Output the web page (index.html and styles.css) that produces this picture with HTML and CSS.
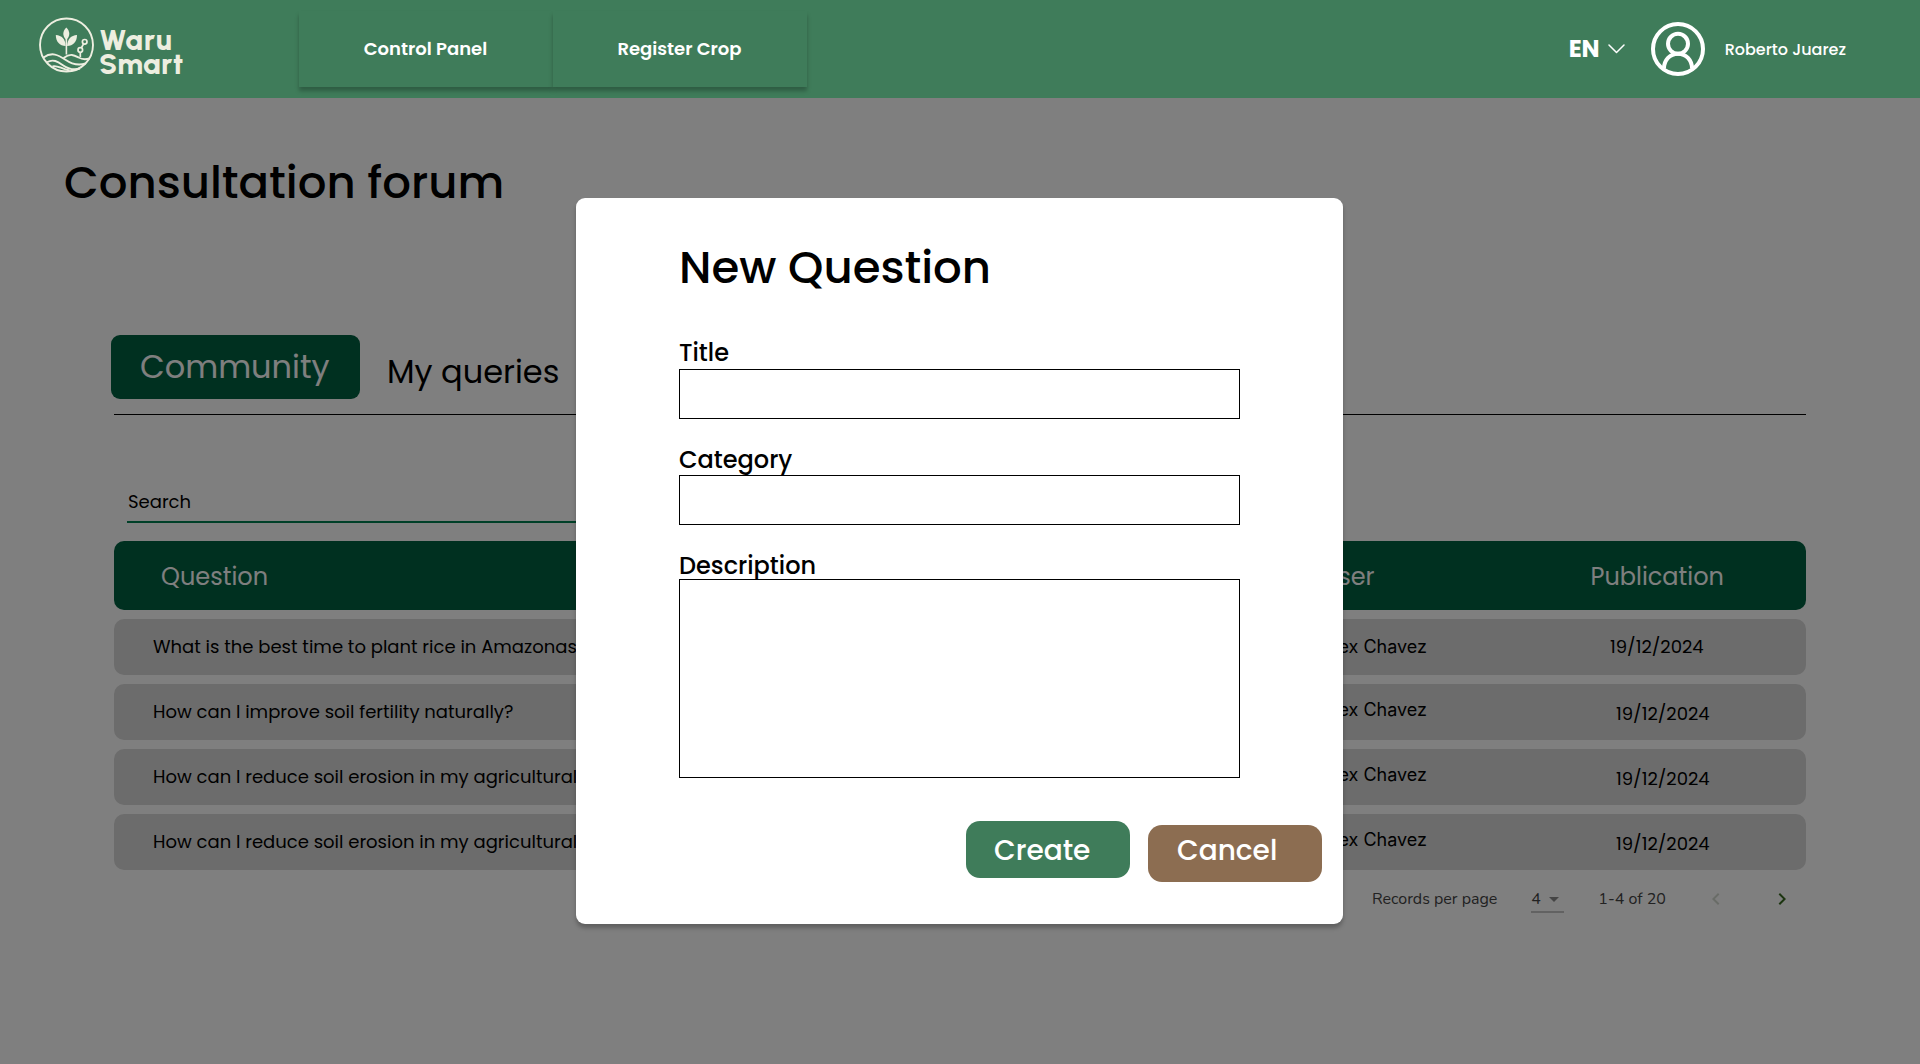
FILE: index.html
```html
<!DOCTYPE html>
<html lang="en">
<head>
<meta charset="utf-8">
<title>Waru Smart – Consultation forum</title>
<link rel="stylesheet" href="styles.css">
</head>
<body>
<header class="topbar">
  <a class="logo">
    <svg class="logo-mark" viewBox="0 0 55 56" fill="none" stroke="currentColor" stroke-width="1.9">
      <circle cx="27.5" cy="28" r="26.5"/>
      <g fill="currentColor" stroke="none">
        <path d="M27.3 10.5c4 4 4 8.500 0 12.500c-4-4-4-8.500 0-12.500z"/>
        <path d="M16.800 18c6 .4 9.600 4 9.900 11c-6-.2-9.800-4-9.900-11z"/>
        <path d="M38 18c-6 .4-9.600 4-9.900 11c6-.2 9.800-4 9.900-11z"/>
      </g>
      <path d="M27.400 22v15.500" stroke-width="1.600"/>
      <circle cx="45.700" cy="24.800" r="2.300" stroke-width="1.700"/>
      <circle cx="41.300" cy="33" r="2.300" stroke-width="1.700"/>
      <path d="M44.500 27l-2.100 3.900M41.300 35.400v4.600" stroke-width="1.700"/>
      <path d="M4.500 40.500C13 34.500 19.500 38 26 42.500S39 49 46.500 46.500"/>
      <path d="M24.500 41C31.500 36 35 38 39.500 40.500S47 42.500 50.500 41.500"/>
      <path d="M8 45.300c6-3.800 11-.5 15.500 2.700s11 5.500 17.500 3.500"/>
      <path d="M13.500 49.300c5-1.300 8 2.200 17 4.200"/>
    </svg>
    <span class="logo-text"><span class="logo-line logo-waru">Waru</span><span class="logo-line">Smart</span></span>
  </a>
  <nav class="nav">
    <a class="nav-item">Control Panel</a>
    <a class="nav-item">Register Crop</a>
  </nav>
  <div class="account">
    <span class="lang">EN</span>
    <svg class="lang-arrow" viewBox="0 0 17 10" fill="none" stroke="currentColor" stroke-width="1.5" stroke-linecap="round" stroke-linejoin="round"><path d="M1 1l7.500 7.500L16 1"/></svg>
    <svg class="avatar" viewBox="0 0 54 54" fill="none" stroke="currentColor" stroke-width="4">
      <circle cx="27" cy="27" r="25"/>
      <circle cx="27" cy="21.800" r="10"/>
      <path d="M13 46.500C13 38 19 31.800 27 31.800S41 38 41 46.500"/>
    </svg>
    <span class="user-name">Roberto Juarez</span>
  </div>
</header>

<main class="page">
  <h1 class="page-title">Consultation forum</h1>
  <section class="forum">
    <div class="tabs">
      <button class="tab tab-active">Community</button>
      <button class="tab">My queries</button>
    </div>
    <div class="search">Search</div>
    <div class="table">
      <div class="row row-head"><span class="question">Question</span><span class="author">User</span><span class="date">Publication</span></div>
      <div class="row row-first"><span class="question">What is the best time to plant rice in Amazonas?</span><span class="author">Alex Chavez</span><span class="date">19/12/2024</span></div>
      <div class="row"><span class="question">How can I improve soil fertility naturally?</span><span class="author">Alex Chavez</span><span class="date">19/12/2024</span></div>
      <div class="row"><span class="question">How can I reduce soil erosion in my agricultural</span><span class="author">Alex Chavez</span><span class="date">19/12/2024</span></div>
      <div class="row"><span class="question">How can I reduce soil erosion in my agricultural</span><span class="author">Alex Chavez</span><span class="date">19/12/2024</span></div>
    </div>
    <div class="pager">
      <span>Records per page</span>
      <span class="page-size">4 <svg class="caret" viewBox="0 0 10 5"><path d="M0 0h10L5 5z"/></svg></span>
      <span class="range">1-4 of 20</span>
      <svg class="step step-prev" viewBox="0 0 24 24"><path d="M15.410 7.410L14 6l-6 6 6 6 1.410-1.410L10.830 12z"/></svg>
      <svg class="step step-next" viewBox="0 0 24 24"><path d="M10 6L8.590 7.410 13.170 12l-4.580 4.590L10 18l6-6z"/></svg>
    </div>
  </section>
</main>

<div class="backdrop">
  <form class="dialog">
    <h2 class="dialog-title">New Question</h2>
    <div class="field"><label class="label" for="title">Title</label><input class="input" id="title"></div>
    <div class="field field-category"><label class="label" for="category">Category</label><input class="input" id="category"></div>
    <div class="field field-description"><label class="label" for="description">Description</label><textarea class="input" id="description"></textarea></div>
    <div class="actions">
      <button class="btn btn-create" type="button">Create</button>
      <button class="btn btn-cancel" type="button">Cancel</button>
    </div>
  </form>
</div>
</body>
</html>
```
FILE: styles.css
```css
* { box-sizing: border-box; }

body {
  margin: 0;
  height: 1064px;
  overflow: hidden;
  background: #fff;
  color: #000;
  font-family: Poppins, Inter, sans-serif;
}

button, input, textarea { font: inherit; margin: 0; border: 0; padding: 0; }

/* Top bar */
.topbar {
  display: flex;
  align-items: center;
  height: 98px;
  padding: 0 74px 0 39px;
  background: #3f7c5a;
  color: #fff;
}
.logo { display: flex; align-self: flex-start; width: 260px; margin-top: 17px; color: #edeee0; }
.logo-mark { width: 55px; height: 56px; margin-right: 5px; }
.logo-text {
  margin-top: 11px;
  font: 800 29px/24px Urbanist, Poppins, sans-serif;
  letter-spacing: .4px;
}
.logo-line { display: block; }
.logo-waru { letter-spacing: 1.1px; }
.nav { display: flex; }
.nav-item {
  width: 254px;
  height: 76px;
  padding-right: 1px;
  font-weight: 600;
  font-size: 18px;
  line-height: 76px;
  text-align: center;
  background: #3f7c5a;
  box-shadow: 0 4px 4px rgba(0, 0, 0, .25);
}
.account { display: flex; align-items: center; margin-left: auto; }
.lang { margin-top: -1px; font-weight: 700; font-size: 24px; }
.lang-arrow { width: 17px; height: 10px; margin: 0 26px 0 8px; }
.avatar { width: 54px; height: 54px; margin-right: 20px; }
.user-name { font-weight: 500; font-size: 16px; }

/* Forum page */
.page { padding: 51px 114px 0 64px; }
.page-title { margin: 0; font-weight: 500; font-size: 45px; line-height: 68px; }
.forum { margin: 118px 0 0 50px; }
.tabs {
  display: flex;
  gap: 27px;
  height: 80px;
  border-bottom: 1px solid #000;
}
.tab { height: 64px; margin-top: 5px; background: none; font-size: 32px; line-height: 64px; color: #000; }
.tab-active {
  width: 249px;
  margin: 0 0 0 -3px;
  padding-left: 29px;
  border-radius: 9px;
  background: #006040;
  color: #fff;
  text-align: left;
}
.search {
  width: 560px;
  height: 35px;
  margin: 73px 0 18px 13px;
  padding-left: 1px;
  border-bottom: 2px solid #008050;
  font-size: 18px;
  line-height: 27px;
}
.table { display: grid; gap: 9px; }
.row {
  display: grid;
  grid-template-columns: 1100px 213px 1fr;
  align-items: start;
  height: 56px;
  border-radius: 10px;
  background: #d9d9d9;
  font-size: 18px;
  line-height: 56px;
}
.question { padding-left: 39px; }
.author { margin-top: -2px; font-family: Inter, sans-serif; text-align: right; }
.date { margin-top: 2px; padding-left: 189px; }
.row-first .author, .row-first .date { margin-top: 0; }
.row-first .date { padding-left: 183px; }
.row-head {
  height: 69px;
  background: #006040;
  color: #fff;
  font-size: 24px;
  line-height: 71px;
}
.row-head .question { padding-left: 47px; }
.row-head .author { margin-top: 0; padding-right: 52.5px; font-family: inherit; }
.row-head .date { margin-top: 0; padding-left: 163.5px; }

.pager {
  display: flex;
  margin: 17px 0 0 1258px;
  font: 16px/24px Nunito, "Open Sans", sans-serif;
  color: #444;
}
.page-size {
  display: flex;
  justify-content: space-between;
  align-items: center;
  width: 33px;
  height: 26px;
  margin: 0 33px 0 34px;
  padding-right: 5px;
  border-bottom: 2px solid #c4c4c4;
}
.caret { width: 10px; height: 5px; fill: #8a8a8a; }
.range { width: 107px; padding-left: 1px; }
.step { width: 24px; height: 24px; }
.step-prev { fill: #d3d8cf; margin-right: 42px; }
.step-next { fill: #386a20; }

/* New question dialog */
.backdrop {
  position: absolute;
  inset: 98px 0 0;
  padding: 100px 0 0 576px;
  background: rgba(0, 0, 0, .5);
}
.dialog {
  width: 767px;
  height: 726px;
  padding: 36px 21px 0 103px;
  border-radius: 9px;
  background: #fff;
  box-shadow: 0 4px 4px rgba(0, 0, 0, .25);
}
.dialog-title { margin: 0 0 35px; font-weight: 500; font-size: 45px; line-height: 68px; }
.field { display: flex; flex-direction: column; width: 561px; margin-bottom: 25px; }
.label { height: 32px; font-weight: 500; font-size: 24px; line-height: 32px; }
.input {
  position: relative;
  width: 100%;
  height: 50px;
  border: 1px solid #000;
  background: #fff;
  resize: none;
}
.field-category .label { height: 31px; }
.field-description { margin-bottom: 43px; }
.field-description .label { height: 29px; }
.field-description .input { height: 199px; }
.actions { display: flex; justify-content: flex-end; gap: 18px; }
.btn {
  height: 57px;
  border-radius: 14px;
  color: #fff;
  font-weight: 500;
  font-size: 28px;
  text-align: left;
}
.btn-create { width: 164px; padding: 1px 0 0 28px; background: #3f7c5a; line-height: 58px; }
.btn-cancel { width: 174px; margin-top: 4px; padding: 0 0 5px 29px; background: #8c6d51; line-height: 50px; }
```
